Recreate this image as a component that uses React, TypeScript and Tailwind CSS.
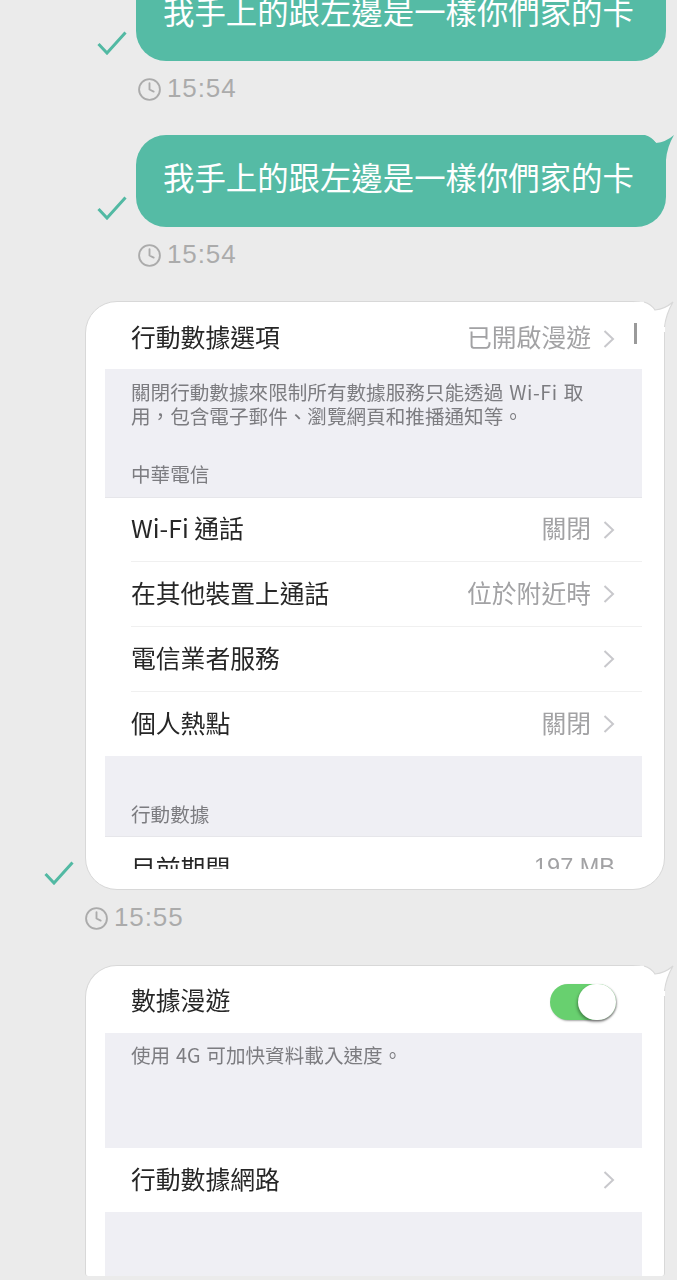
import { Clock } from "lucide-react";

const cjk = "font-['Noto_Sans_CJK_TC','Noto_Sans',sans-serif]";

const Check = ({ className = "" }: { className?: string }) => (
  <svg width="30" height="24" viewBox="0 0 30 24" className={className} fill="none">
    <path d="M1.5 13 L10 22 L28.5 1.5" stroke="#52b9a3" strokeWidth="3" />
  </svg>
);

const Time = ({ value, className = "" }: { value: string; className?: string }) => (
  <div className={`flex h-[30px] items-center gap-[5px] text-[#ababab] ${className}`}>
    <Clock size={25} strokeWidth={1.8} className="mt-[2px]" />
    <span className="font-['Liberation_Sans',sans-serif] text-[26px] leading-[30px] tracking-[0.9px]">{value}</span>
  </div>
);

const Tail = ({ fill, stroke, className = "right-[-10px] top-[-1px]" }: { fill: string; stroke?: string; className?: string }) => (
  <svg width="45" height="32" viewBox="0 0 45 32" fill="none" className={`absolute ${className}`}>
    <path d="M5 1 H15 Q22 3 26 9 Q36 8 44 1 Q37 13 36 26 V31 H5 Z" fill={fill} />
    {stroke && <path d="M15 1 Q22 3 26 9 Q36 8 44 1 Q37 13 35.5 26" stroke={stroke} strokeWidth="1.2" />}
  </svg>
);

const TextBubble = ({ className = "" }: { className?: string }) => (
  <div className={`relative flex h-[92px] w-[530px] items-center rounded-[30px] bg-[#55bba5] pb-[8px] pl-[27px] ${className}`}>
    <span className={`${cjk} whitespace-nowrap text-[31.4px] leading-[40px] text-white`}>我手上的跟左邊是一樣你們家的卡</span>
  </div>
);

const Chevron = () => (
  <svg width="12" height="20" viewBox="0 0 12 20" fill="none" className="ml-[12px] shrink-0">
    <path d="M1.5 2 L10 10 L1.5 18" stroke="#c8c8cc" strokeWidth="2" />
  </svg>
);

const Row = ({ label, value, divider = true, height = "h-[65px]" }: { label: string; value?: string; divider?: boolean; height?: string }) => (
  <div className={`flex items-center pl-[26px] ${height}`}>
    <div className={`flex h-full flex-1 items-center pr-[27px] ${divider ? "border-b border-[#f0f0f0]" : ""}`}>
      <span className="mb-[5px] flex-1 whitespace-nowrap text-[24.8px] leading-[32px] text-[#262626]">{label}</span>
      {value && <span className="mb-[5px] whitespace-nowrap text-[24.8px] leading-[32px] text-[#a2a2a4]">{value}</span>}
      <Chevron />
    </div>
  </div>
);

const Caption = ({ children, className = "" }: { children: React.ReactNode; className?: string }) => (
  <p className={`whitespace-nowrap pl-[26px] text-[19.6px] leading-[24px] text-[#7c7c80] [word-spacing:1.5px] ${className}`}>{children}</p>
);

export default function App() {
  return (
    <div className={`${cjk} h-[1280px] w-[677px] overflow-hidden bg-[#ebebeb]`}>
      {/* first message runs off the top */}
      <div className="-mt-[31px] flex items-end pl-[97px]">
        <Check className="mb-[6px] mr-[9px]" />
        <TextBubble />
      </div>
      <Time value="15:54" className="ml-[137px] mt-[12px]" />

      <div className="mt-[32px] flex items-end pl-[97px]">
        <Check className="mb-[7px] mr-[9px]" />
        <div className="relative">
          <TextBubble />
          <Tail fill="#55bba5" className="right-[-9px] top-[-1px]" />
        </div>
      </div>
      <Time value="15:54" className="ml-[137px] mt-[12px]" />

      {/* settings screenshot */}
      <div className="mt-[32px] flex items-end pl-[44px]">
        <Check className="mb-[5px] mr-[11px]" />
        <div className="relative h-[589px] w-[580px] rounded-[32px] border border-[#d8d8d8] bg-white">
          <Tail fill="#ffffff" stroke="#d8d8d8" />
          <div className="relative ml-[19px] mr-[22px] blur-[0.4px]">
            <Row label="行動數據選項" value="已開啟漫遊" divider={false} height="h-[67px] pt-[6px]" />
            <div className="absolute right-[5px] top-[21px] h-[21px] w-[3px] bg-[#9a9a9a]" />
            <div className="h-[128px] bg-[#efeff4] pt-[11px]">
              <Caption>關閉行動數據來限制所有數據服務只能透過 <span className="tracking-[0.6px]">Wi-Fi</span> 取</Caption>
              <Caption>用，包含電子郵件、瀏覽網頁和推播通知等。</Caption>
              <Caption className="mt-[34px]">中華電信</Caption>
            </div>
            <div className="border-t border-[#e6e6ea]">
              <Row label="Wi-Fi 通話" value="關閉" height="h-[64px]" />
              <Row label="在其他裝置上通話" value="位於附近時" />
              <Row label="電信業者服務" />
              <Row label="個人熱點" value="關閉" divider={false} height="h-[64px]" />
            </div>
            <div className="h-[81px] border-b border-[#e6e6ea] bg-[#efeff4] pt-[46px]">
              <Caption>行動數據</Caption>
            </div>
            <div className="h-[32px] overflow-hidden">
              <div className="flex items-center pl-[26px] pr-[27px] pt-[14px]">
                <span className="flex-1 text-[24.8px] leading-[32px] text-[#262626]">目前期間</span>
                <span className="font-['Liberation_Sans',sans-serif] text-[23.5px] leading-[32px] text-[#a2a2a4]">197 MB</span>
              </div>
            </div>
          </div>
        </div>
      </div>
      <Time value="15:55" className="ml-[84px] mt-[12px]" />

      {/* second screenshot, cut at the bottom */}
      <div className="ml-[85px] mt-[33px]">
        <div className="relative h-[311px] w-[580px] rounded-b-[3px] rounded-t-[32px] border border-b-0 border-[#d8d8d8] bg-white">
          <Tail fill="#ffffff" stroke="#d8d8d8" />
          <div className="relative ml-[19px] mr-[22px] blur-[0.4px]">
            <div className="flex h-[67px] items-center pl-[26px] pr-[26px] pt-[5px]">
              <span className="mb-[7px] flex-1 text-[24.8px] leading-[32px] text-[#262626]">數據漫遊</span>
              <div className="flex h-[36px] w-[66px] justify-end rounded-full bg-[#68d06f] shadow-[1px_1px_2px_rgba(0,0,0,0.35)]">
                <div className="h-[36px] w-[38px] rounded-full bg-white shadow-[-1px_2px_3px_rgba(0,0,0,0.35)]" />
              </div>
            </div>
            <div className="h-[115px] bg-[#efeff4] pt-[10px]">
              <Caption>使用 4G 可加快資料載入速度。</Caption>
            </div>
            <Row label="行動數據網路" divider={false} height="h-[64px]" />
            <div className="h-[64px] bg-[#efeff4]" />
          </div>
        </div>
      </div>
    </div>
  );
}
